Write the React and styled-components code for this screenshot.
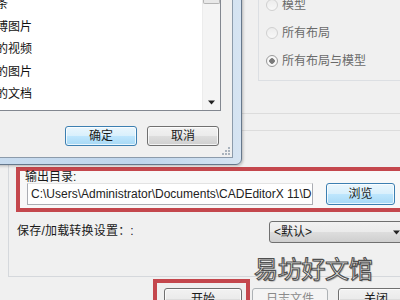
import React from 'react';
import styled, { createGlobalStyle } from 'styled-components';

const GlobalStyle = createGlobalStyle`
html, body {
    margin: 0;
    padding: 0;
    background: #f0f0f0;
}
body {
    font-family: "Liberation Sans", "Noto Sans CJK SC", sans-serif;
    font-size: 12px;
    color: #1a1a1a;
}
`

// page
const Screen = styled.div`
position: relative;
width: 400px;
height: 300px;
overflow: hidden;
background: #f0f0f0;
`
const MainWindow = styled.div`
display: flex;
flex-direction: column;
`

// scope options (top right)
const OptionsPanel = styled.div`
margin-left: 258px;
height: 80px;
border-left: 1px solid #dcdfe3;
border-bottom: 1px solid #dcdfe3;
`
const RadioList = styled.div`
display: flex;
flex-direction: column;
margin-top: -9px;
`
const RadioRow = styled.div`
display: flex;
align-items: center;
gap: 4px;
height: 28px;
padding-left: 7px;
color: #6a6a6a;
line-height: 14px;
`
const RadioDot = styled.span`
box-sizing: border-box;
width: 12px;
height: 12px;
border-radius: 50%;
border: 1px solid ${p => p.checked ? '#9a9a9a' : '#d0d0d0'};
background: ${p => p.checked
    ? 'radial-gradient(circle, #7a7a7a 0 2.5px, #f8f8f8 3px)'
    : 'linear-gradient(#ececec, #f8f8f8)'};
`
const Rule = styled.div`
height: 1px;
background: #dcdcdc;
margin-top: ${p => p.gap}px;
`

// main group box
const GroupBox = styled.div`
margin-left: 8px;
padding: 36px 0 33px;
border-left: 1px solid #d5d8dc;
border-bottom: 1px solid #d5d8dc;
display: flex;
flex-direction: column;
`
const OutputBox = styled.div`
margin-left: 7px;
width: 388px;
height: 45px;
box-sizing: border-box;
border: 4px solid #c4474d;
background: #f8f8f8;
display: flex;
flex-direction: column;
`
const Label = styled.div`
line-height: 12px;
padding-left: 5px;
white-space: nowrap;
`
const InputRow = styled.div`
display: flex;
align-items: center;
gap: 13px;
padding-left: 7px;
`
const PathInput = styled.div`
box-sizing: border-box;
width: 286px;
height: 22px;
border: 1px solid #abadb3;
border-top-color: #e3e3e3;
background: #fff;
padding: 0 3px;
line-height: 20px;
white-space: nowrap;
overflow: hidden;
font-size: 12px;
color: #222;
`
const Button = styled.div`
box-sizing: border-box;
display: flex;
align-items: center;
justify-content: center;
width: ${p => p.w}px;
height: ${p => p.h || 22}px;
flex-shrink: 0;
border-radius: 3px;
font-size: 12px;
line-height: 14px;
border: 1px solid ${p => p.primary ? '#3c7fb1' : p.disabled ? '#adb2b5' : '#707070'};
color: ${p => p.disabled ? '#8a8a8a' : '#1a1a1a'};
background: ${p => p.primary
    ? 'linear-gradient(#eaf6fd 0%, #d9f0fc 48%, #bee6fd 52%, #a7d9f5 100%)'
    : p.disabled
        ? '#f4f4f4'
        : 'linear-gradient(#f2f2f2 0%, #ebebeb 48%, #dddddd 52%, #cfcfcf 100%)'};
box-shadow: inset 0 0 0 1px ${p => p.disabled ? '#f4f4f4' : 'rgba(255,255,255,0.75)'};
`
const SettingsRow = styled.div`
display: flex;
align-items: flex-start;
justify-content: space-between;
margin-top: 9px;
padding-left: 8px;
`
const SettingsLabel = styled.div`
padding-top: 3px;
line-height: 14px;
letter-spacing: 0.2px;
`
const Combo = styled.div`
box-sizing: border-box;
width: 135px;
height: 22px;
margin-right: -4px;
display: flex;
align-items: center;
justify-content: space-between;
padding: 0 3px 0 4px;
border: 1px solid #707070;
border-radius: 3px;
background: linear-gradient(#f2f2f2 0%, #ebebeb 48%, #dddddd 52%, #cfcfcf 100%);
line-height: 14px;
`

// bottom buttons
const ButtonBar = styled.div`
display: flex;
align-items: flex-start;
margin-top: 2px;
gap: 10px;
`
const Highlight = styled.div`
margin-left: 153px;
margin-right: -8px;
padding: 5px 4px 0 7px;
border: 4px solid #c4474d;
border-bottom: none;
`
const BarButtonSlot = styled.div`
margin-top: 9px;
`

// watermark over the page
const Watermark = styled.div`
position: absolute;
left: 254px;
top: 252px;
font-family: "Noto Sans CJK SC", sans-serif;
font-size: 24px;
line-height: 32px;
letter-spacing: -0.3px;
color: #ffffff;
-webkit-text-stroke: 1.1px #4f4f4f;
text-shadow: 1px 1px 1px rgba(0,0,0,0.35);
`

// folder dialog (window on top)
const Dialog = styled.div`
position: absolute;
left: -12px;
top: -12px;
width: 254px;
height: 177px;
box-sizing: border-box;
padding: 2px 8px 6px 2px;
border: 1px solid #66788c;
border-radius: 6px;
background: linear-gradient(90deg, #c9dcef, #bfd5ec 60%, #d6e4f2);
box-shadow: 1px 1px 3px rgba(0,0,0,0.25);
`
const Client = styled.div`
position: relative;
height: 100%;
box-sizing: border-box;
border: 1px solid #8c9bab;
background: #f0f0f0;
display: flex;
flex-direction: column;
`
const FolderList = styled.div`
display: flex;
height: 119px;
margin-right: 11px;
box-sizing: border-box;
border: 1px solid #828790;
background: #fff;
`
const Items = styled.div`
flex: 1;
overflow: hidden;
`
const Item = styled.div`
height: 22.5px;
line-height: 22.5px;
text-indent: ${p => p.indent}px;
white-space: nowrap;
font-size: 12px;
color: #111;
`
const ScrollBar = styled.div`
width: 17px;
display: flex;
flex-direction: column;
justify-content: space-between;
background: #f4f4f4;
border-left: 1px solid #ececec;
`
const Thumb = styled.div`
height: 10px;
border: 1px solid #b5b5b5;
border-top: none;
border-radius: 0 0 2px 2px;
background: #e8e8e8;
`
const ArrowButton = styled.div`
height: 16px;
display: flex;
align-items: center;
justify-content: center;
`
const DialogButtons = styled.div`
display: flex;
justify-content: flex-end;
gap: 10px;
margin-top: 15px;
padding-right: 13px;
`
const Grip = styled.svg`
position: absolute;
right: 2px;
bottom: 2px;
`

const Arrow = ({ size = 7 }) => (
    <svg width={size} height={Math.ceil(size / 2) + 1} viewBox="0 0 7 4">
        <path d="M0 0 H7 L3.5 4 Z" fill="#222" />
    </svg>
)

export default function App() {
    return (
        <>
            <GlobalStyle />
            <Screen>
                <MainWindow>
                    <OptionsPanel>
                        <RadioList>
                            <RadioRow><RadioDot />模型</RadioRow>
                            <RadioRow><RadioDot />所有布局</RadioRow>
                            <RadioRow><RadioDot checked />所有布局与模型</RadioRow>
                        </RadioList>
                    </OptionsPanel>
                    <Rule gap={32} />
                    <Rule gap={16} />

                    <GroupBox>
                        <OutputBox>
                            <Label>输出目录:</Label>
                            <InputRow>
                                <PathInput>C:\Users\Administrator\Documents\CADEditorX 11\D</PathInput>
                                <Button primary w={69}>浏览</Button>
                            </InputRow>
                        </OutputBox>
                        <SettingsRow>
                            <SettingsLabel>保存/加载转换设置：:</SettingsLabel>
                            <Combo>
                                <span>&lt;默认&gt;</span>
                                <Arrow />
                            </Combo>
                        </SettingsRow>
                    </GroupBox>

                    <ButtonBar>
                        <Highlight>
                            <Button w={78}>开始</Button>
                        </Highlight>
                        <BarButtonSlot>
                            <Button disabled w={76}>日志文件</Button>
                        </BarButtonSlot>
                        <BarButtonSlot>
                            <Button w={76}>关闭</Button>
                        </BarButtonSlot>
                    </ButtonBar>
                </MainWindow>

                <Watermark>易坊好文馆</Watermark>

                <Dialog>
                    <Client>
                        <FolderList>
                            <Items>
                                <Item indent={-9}>便条</Item>
                                <Item indent={-9}>微博图片</Item>
                                <Item indent={-9}>我的视频</Item>
                                <Item indent={-9}>我的图片</Item>
                                <Item indent={-9}>我的文档</Item>
                            </Items>
                            <ScrollBar>
                                <Thumb />
                                <ArrowButton><Arrow /></ArrowButton>
                            </ScrollBar>
                        </FolderList>
                        <DialogButtons>
                            <Button primary w={72} h={20}>确定</Button>
                            <Button w={72} h={20}>取消</Button>
                        </DialogButtons>
                        <Grip width="9" height="9" viewBox="0 0 9 9">
                            <g fill="#a9b3bd">
                                <rect x="7" y="1" width="2" height="2" />
                                <rect x="4" y="4" width="2" height="2" />
                                <rect x="7" y="4" width="2" height="2" />
                                <rect x="1" y="7" width="2" height="2" />
                                <rect x="4" y="7" width="2" height="2" />
                                <rect x="7" y="7" width="2" height="2" />
                            </g>
                        </Grip>
                    </Client>
                </Dialog>
            </Screen>
        </>
    )
}
